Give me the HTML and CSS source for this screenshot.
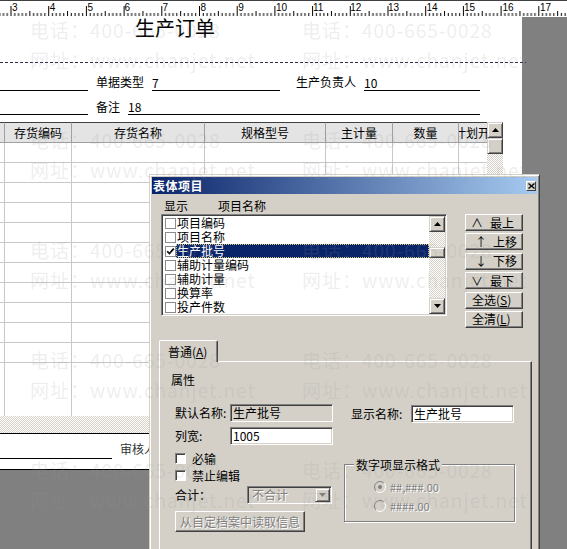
FILE: index.html
```html
<!DOCTYPE html>
<html lang="zh-CN">
<head>
<meta charset="utf-8">
<title>生产订单</title>
<link rel="stylesheet" href="styles.css">
</head>
<body>
<div class="screen">
  <svg class="ruler" width="567" height="17" viewBox="0 0 567 17">
    <defs>
      <pattern id="ticks" x="10.5" y="0" width="37.7" height="17" patternUnits="userSpaceOnUse">
        <path d="M0.5 6V16M4.27 13V16M8.04 13V16M11.81 13V16M15.58 13V16M19.35 11V16M23.12 13V16M26.89 13V16M30.66 13V16M34.43 13V16" stroke="#000" stroke-width="1"/>
      </pattern>
    </defs>
    <rect width="567" height="17" fill="#fff"/>
    <rect width="567" height="17" fill="url(#ticks)"/>
    <rect width="567" height="1" fill="#404040"/>
    <g class="ruler-nums">
      <text x="12" y="11">3</text>
      <text x="49.7" y="11">4</text>
      <text x="87.4" y="11">5</text>
      <text x="124.5" y="11">6</text>
      <text x="162.5" y="11">7</text>
      <text x="200.5" y="11">8</text>
      <text x="238.2" y="11">9</text>
      <text x="275.9" y="11">10</text>
      <text x="313" y="11">11</text>
      <text x="350.3" y="11">12</text>
      <text x="388" y="11">13</text>
      <text x="426.5" y="11">14</text>
      <text x="464" y="11">15</text>
      <text x="502.5" y="11">16</text>
      <text x="540" y="11">17</text>
    </g>
  </svg>

  <div class="page">
    <div class="title-band"><span class="doc-title">生产订单</span></div>
    <div class="dash"></div>
    <div class="frow frow-1">
      <span class="lline"></span>
      <span class="flbl">单据类型</span>
      <span class="fval val-type">7</span>
      <span class="flbl flbl-owner">生产负责人</span>
      <span class="fval val-owner">10</span>
    </div>
    <div class="frow frow-2">
      <span class="lline"></span>
      <span class="flbl">备注</span>
      <span class="fval val-note">18</span>
    </div>

    <div class="grid-wrap">
      <div class="grid">
        <div class="hd hd-first"></div>
        <div class="hd">存货编码</div>
        <div class="hd">存货名称</div>
        <div class="hd">规格型号</div>
        <div class="hd">主计量</div>
        <div class="hd">数量</div>
        <div class="hd hd-cut">计划开工日期</div>
        <div class="col col-first"></div>
        <div class="col"></div>
        <div class="col"></div>
        <div class="col"></div>
        <div class="col"></div>
        <div class="col"></div>
        <div class="col"></div>
      </div>
      <div class="vscroll">
        <div class="sbb"><svg width="7" height="4" viewBox="0 0 7 4"><polygon points="0,4 3.5,0 7,4" fill="#000"/></svg></div>
        <div class="sbb"></div>
        <div class="hatch sb-fill"></div>
      </div>
    </div>
    <div class="hatch hscroll"></div>
    <div class="footer">
      <span class="lline lline-foot"></span>
      <span class="ft-lbl">审核人</span>
    </div>
  </div>

  <div class="dialog">
    <div class="titlebar">
      <span class="ttl">表体项目</span>
      <span class="xbtn"><svg width="7" height="6" viewBox="0 0 7 6"><path d="M0.5 0.5L6.5 5.5M6.5 0.5L0.5 5.5" stroke="#000" stroke-width="1.3"/></svg></span>
    </div>
    <div class="colhdr"><span>显示</span><span class="colhdr-name">项目名称</span></div>
    <div class="listrow">
      <div class="listbox">
        <div class="items">
          <div class="item"><span class="lcb"></span><span class="itxt">项目编码</span></div>
          <div class="item"><span class="lcb"></span><span class="itxt">项目名称</span></div>
          <div class="item item-sel"><span class="lcb"><svg width="9" height="9" viewBox="0 0 9 9"><path d="M1.2 4.2L3.4 6.6L7.8 1.6" stroke="#000" stroke-width="1.7" fill="none"/></svg></span><span class="itxt">生产批号</span></div>
          <div class="item"><span class="lcb"></span><span class="itxt">辅助计量编码</span></div>
          <div class="item"><span class="lcb"></span><span class="itxt">辅助计量</span></div>
          <div class="item"><span class="lcb"></span><span class="itxt">换算率</span></div>
          <div class="item"><span class="lcb"></span><span class="itxt">投产件数</span></div>
        </div>
        <div class="lscroll">
          <div class="sbb"><svg width="7" height="4" viewBox="0 0 7 4"><polygon points="0,4 3.5,0 7,4" fill="#000"/></svg></div>
          <div class="hatch lsc-a"></div>
          <div class="sbb lsc-thumb"></div>
          <div class="hatch sb-fill"></div>
          <div class="sbb"><svg width="7" height="4" viewBox="0 0 7 4"><polygon points="0,0 7,0 3.5,4" fill="#000"/></svg></div>
        </div>
      </div>
      <div class="btncol">
        <div class="btn btn-a"><span class="ar">∧</span><span class="bt bt-a">最上</span></div>
        <div class="btn btn-b"><span class="ar">↑</span><span class="bt bt-b">上移</span></div>
        <div class="btn btn-b"><span class="ar">↓</span><span class="bt bt-b">下移</span></div>
        <div class="btn btn-a"><span class="ar">∨</span><span class="bt bt-a">最下</span></div>
        <div class="btn btn-c">全选(<u>S</u>)</div>
        <div class="btn btn-c">全清(<u>L</u>)</div>
      </div>
    </div>

    <div class="tabs">
      <div class="tabstrip"><div class="tab">普通(<u>A</u>)</div></div>
      <div class="tabpanel">
        <div class="ptitle">属性</div>
        <div class="pcols">
          <div class="pleft">
            <div class="prow">
              <span class="plbl">默认名称:</span>
              <span class="tbox tbox-ro">生产批号</span>
            </div>
            <div class="prow prow-gap">
              <span class="plbl">列宽:</span>
              <span class="tbox">1005</span>
            </div>
            <div class="pchk"><span class="cbx"></span><span class="pchk-lbl">必输</span></div>
            <div class="pchk"><span class="cbx"></span><span class="pchk-lbl">禁止编辑</span></div>
            <div class="psum">
              <span class="psum-lbl">合计：</span>
              <span class="combo">
                <span class="combo-txt">不合计</span>
                <span class="sbb combo-btn"><svg width="7" height="4" viewBox="0 0 7 4"><polygon points="0,0 7,0 3.5,4" fill="#808080"/></svg></span>
              </span>
            </div>
            <div class="rbtn">从自定档案中读取信息</div>
          </div>
          <div class="pright">
            <div class="prow prow-r">
              <span class="plbl plbl-wide">显示名称:</span>
              <span class="tbox">生产批号</span>
            </div>
            <div class="group">
              <div class="legend">数字项显示格式</div>
              <div class="ropt">
                <svg class="radio" width="12" height="12" viewBox="0 0 12 12"><circle cx="6" cy="6" r="5.5" fill="#d4d0c8"/><path d="M2.1 9.9A5.5 5.5 0 0 1 9.9 2.1" stroke="#808080" fill="none"/><path d="M9.9 2.1A5.5 5.5 0 0 1 2.1 9.9" stroke="#fff" fill="none"/><circle cx="6" cy="6" r="2" fill="#808080"/></svg>
                <span class="rlbl">##,###.00</span>
              </div>
              <div class="ropt">
                <svg class="radio" width="12" height="12" viewBox="0 0 12 12"><circle cx="6" cy="6" r="5.5" fill="#d4d0c8"/><path d="M2.1 9.9A5.5 5.5 0 0 1 9.9 2.1" stroke="#808080" fill="none"/><path d="M9.9 2.1A5.5 5.5 0 0 1 2.1 9.9" stroke="#fff" fill="none"/></svg>
                <span class="rlbl">####.00</span>
              </div>
            </div>
          </div>
        </div>
      </div>
    </div>
  </div>

  <div class="watermark">
    <div class="wm"><div>电话：400-665-0028</div><div>网址：www.chanjet.net</div></div>
    <div class="wm"><div>电话：400-665-0028</div><div>网址：www.chanjet.net</div></div>
    <div class="wm"><div>电话：400-665-0028</div><div>网址：www.chanjet.net</div></div>
    <div class="wm"><div>电话：400-665-0028</div><div>网址：www.chanjet.net</div></div>
    <div class="wm"><div>电话：400-665-0028</div><div>网址：www.chanjet.net</div></div>
    <div class="wm"><div>电话：400-665-0028</div><div>网址：www.chanjet.net</div></div>
    <div class="wm"><div>电话：400-665-0028</div><div>网址：www.chanjet.net</div></div>
    <div class="wm"><div>电话：400-665-0028</div><div>网址：www.chanjet.net</div></div>
    <div class="wm"><div>电话：400-665-0028</div><div>网址：www.chanjet.net</div></div>
    <div class="wm"><div>电话：400-665-0028</div><div>网址：www.chanjet.net</div></div>
  </div>
</div>
</body>
</html>
```

FILE: styles.css
```css
* { box-sizing: border-box; }
html, body { margin: 0; padding: 0; }
body { width: 567px; height: 549px; overflow: hidden; background: #808080; }

.screen {
  position: relative;
  width: 567px;
  height: 549px;
  overflow: hidden;
  background: #808080;
  font-family: "Noto Sans CJK SC", "Noto Sans", sans-serif;
  font-size: 12px;
  color: #000;
}

/* ruler */
.ruler { display: block; }
.ruler-nums { font-family: "Liberation Sans", Arial, sans-serif; font-size: 10px; fill: #000; }

/* report page */
.page { width: 522px; height: 453px; background: #fff; }
.title-band { height: 45px; padding-left: 135px; }
.doc-title { display: block; font-size: 20px; line-height: 21px; }
.dash {
  width: 526px;
  height: 1px;
  background: repeating-linear-gradient(to right, #2c2c4c 0 3px, transparent 3px 5px);
}
.frow { display: flex; align-items: flex-end; }
.frow-1 { height: 28px; }
.frow-2 { height: 24px; }
.lline { width: 88px; border-bottom: 1px solid #000; flex: none; }
.flbl { margin-left: 8px; line-height: 14px; margin-bottom: 2px; white-space: nowrap; }
.frow-2 .flbl { margin-bottom: 1px; }
.flbl-owner { margin-left: 16px; }
.fval { margin-left: 8px; line-height: 14px; border-bottom: 1px solid #000; }
.val-type { width: 128px; }
.val-owner { width: 116px; }
.val-note { width: 352px; }

/* table */
.grid-wrap { display: flex; height: 294px; margin-top: 7px; }
.grid {
  width: 487px;
  display: grid;
  grid-template-columns: 4px 67px 133px 121px 67px 66px 29px;
  grid-template-rows: 21px 1fr;
  background: repeating-linear-gradient(to bottom, transparent 0 19px, #c8c8c8 19px 20px) 0 21px / 100% 220px no-repeat;
}
.hd {
  background: #e4e4e4;
  border-top: 1px solid #404040;
  border-bottom: 1px solid #a0a0a0;
  border-left: 1px solid #a0a0a0;
  text-align: center;
  line-height: 19px;
  white-space: nowrap;
  overflow: hidden;
}
.hd-first { border-left: 0; }
.hd-cut { text-align: left; text-indent: -5px; }
.col { border-left: 1px solid #c8c8c8; }
.col-first { border-left: 0; }

.hatch {
  background-color: #fff;
  background-image: repeating-conic-gradient(#d4d0c8 0 25%, #fff 0 50%);
  background-size: 2px 2px;
}
.vscroll { width: 16px; display: flex; flex-direction: column; }
.sbb {
  flex: none;
  height: 16px;
  background: #d4d0c8;
  border: 1px solid;
  border-color: #d4d0c8 #404040 #404040 #d4d0c8;
  box-shadow: inset 1px 1px #fff, inset -1px -1px #808080;
  display: flex;
  align-items: center;
  justify-content: center;
}
.sb-fill { flex: 1; }
.hscroll { width: 503px; height: 17px; }
.footer {
  height: 37px;
  border-top: 1px solid #000;
  border-bottom: 1px solid #000;
  display: flex;
  align-items: flex-start;
}
.lline-foot { width: 112px; height: 25px; }
.ft-lbl { margin: 8px 0 0 8px; line-height: 14px; color: #333; }

/* dialog */
.dialog {
  position: absolute;
  left: 149px;
  top: 174px;
  width: 391px;
  height: 390px;
  background: #d4d0c8;
  border: 1px solid;
  border-color: #d4d0c8 #404040 #404040 #d4d0c8;
  box-shadow: inset 1px 1px #fff, inset -1px -1px #808080;
  padding: 2px;
}
.titlebar {
  height: 17px;
  background: linear-gradient(to right, #0a246a, #a6caf0);
  display: flex;
  align-items: center;
  justify-content: space-between;
  padding: 0 1px;
}
.ttl { color: #fff; font-weight: 700; line-height: 17px; letter-spacing: 0.5px; }
.xbtn {
  width: 10px;
  height: 10px;
  background: #d4d0c8;
  border: 1px solid;
  border-color: #fff #404040 #404040 #fff;
  display: flex;
  align-items: center;
  justify-content: center;
}
.colhdr { height: 20px; padding: 5px 0 0 12px; line-height: 14px; display: flex; }
.colhdr-name { margin-left: 30px; }
.listrow { display: flex; align-items: flex-start; padding-left: 9px; }
.listbox {
  width: 286px;
  height: 102px;
  display: flex;
  background: #fff;
  border: 1px solid;
  border-color: #808080 #fff #fff #808080;
  box-shadow: inset 1px 1px #404040, inset -1px -1px #d4d0c8;
  padding: 1px;
}
.items { flex: 1; }
.item { height: 14px; display: flex; align-items: center; }
.lcb {
  flex: none;
  width: 11px;
  height: 11px;
  margin-left: 2px;
  border: 1px solid #8c8c8c;
  background: #fff;
  display: flex;
  align-items: center;
  justify-content: center;
}
.itxt { padding-left: 1px; line-height: 14px; white-space: nowrap; }
.item-sel .itxt {
  flex: 1;
  align-self: stretch;
  background: #0a246a;
  color: #fff;
  outline: 1px dotted #d8c87a;
  outline-offset: -1px;
}
.lscroll { width: 16px; display: flex; flex-direction: column; }
.lsc-a { height: 15px; flex: none; }
.lsc-thumb { height: 11px; }

.btncol { margin-left: 18px; width: 58px; display: flex; flex-direction: column; gap: 2.4px; }
.btn {
  height: 17px;
  background: #d4d0c8;
  border: 1px solid;
  border-color: #fff #404040 #404040 #fff;
  box-shadow: inset -1px -1px #808080;
  display: flex;
  align-items: center;
  line-height: 14px;
  white-space: nowrap;
}
.btn-a { padding-left: 5px; }
.btn-b { padding-left: 9px; }
.btn-c { padding-left: 6px; }
.ar { display: inline-block; width: 12px; text-align: center; }
.bt-a { margin-left: 7px; }
.bt-b { margin-left: 6px; }

.tabs { margin: 12px 0 0 7px; width: 373px; }
.tabstrip { display: flex; }
.tab {
  position: relative;
  z-index: 1;
  width: 59px;
  height: 22px;
  margin-bottom: -1px;
  background: #d4d0c8;
  border-top: 1px solid #fff;
  border-left: 1px solid #fff;
  border-right: 1px solid #404040;
  box-shadow: inset -1px 0 #808080;
  border-radius: 2px 2px 0 0;
  padding: 4px 0 0 8px;
  line-height: 14px;
}
.tabpanel {
  height: 200px;
  border-top: 1px solid #fff;
  border-left: 1px solid #fff;
  border-right: 1px solid #404040;
  box-shadow: inset -1px 0 #808080;
}
.ptitle { margin-top: 11px; padding-left: 11px; line-height: 14px; }
.pcols { display: flex; align-items: flex-start; margin-top: 17px; }
.pleft { width: 173px; padding-left: 15px; }
.pright { width: 171px; margin-left: 11px; padding-top: 1px; }
.prow { display: flex; align-items: center; height: 18px; }
.prow-gap { margin-top: 5px; }
.prow-r { padding-left: 7px; }
.plbl { width: 55px; flex: none; white-space: nowrap; line-height: 18px; }
.plbl-wide { width: 60px; }
.tbox {
  width: 103px;
  height: 18px;
  flex: none;
  background: #fff;
  border: 1px solid;
  border-color: #808080 #fff #fff #808080;
  box-shadow: inset 1px 1px #404040, inset -1px -1px #d4d0c8;
  padding-left: 2px;
  line-height: 16px;
  white-space: nowrap;
}
.tbox-ro { background: #d4d0c8; }
.pchk { display: flex; align-items: center; height: 14px; margin-top: 7px; }
.pchk + .pchk { margin-top: 3px; }
.cbx {
  flex: none;
  width: 11px;
  height: 11px;
  background: #fff;
  border: 1px solid;
  border-color: #808080 #fff #fff #808080;
  box-shadow: inset 1px 1px #404040;
}
.pchk-lbl { margin-left: 6px; line-height: 14px; }
.psum { display: flex; align-items: center; height: 18px; margin-top: 3px; }
.psum-lbl { width: 72px; flex: none; }
.combo {
  width: 85px;
  height: 18px;
  background: #d4d0c8;
  border: 1px solid;
  border-color: #808080 #fff #fff #808080;
  box-shadow: inset 1px 1px #404040, inset -1px -1px #d4d0c8;
  padding: 1px;
  display: flex;
}
.combo-txt { flex: 1; padding-left: 3px; line-height: 14px; color: #808080; text-shadow: 1px 1px #fff; }
.combo-btn { width: 15px; height: 14px; }
.rbtn {
  margin-top: 7px;
  width: 130px;
  height: 21px;
  background: #d4d0c8;
  border: 1px solid;
  border-color: #fff #404040 #404040 #fff;
  box-shadow: inset -1px -1px #808080;
  display: flex;
  align-items: center;
  justify-content: center;
  color: #808080;
  text-shadow: 1px 1px #fff;
  white-space: nowrap;
}
.group {
  margin-top: 41px;
  width: 171px;
  height: 58px;
  border: 1px solid #808080;
  box-shadow: inset 1px 1px #fff, 1px 1px #fff;
}
.legend {
  width: fit-content;
  margin: -7px 0 0 9px;
  padding: 0 2px;
  background: #d4d0c8;
  line-height: 14px;
}
.ropt {
  display: flex;
  align-items: center;
  height: 14px;
  padding-left: 29px;
  margin-top: 8px;
}
.ropt + .ropt { margin-top: 5px; }
.radio { flex: none; display: block; }
.rlbl { margin-left: 4px; font-size: 11px; line-height: 14px; color: #808080; text-shadow: 1px 1px #fff; }

/* watermark overlay */
.watermark {
  position: absolute;
  left: 30px;
  top: 15px;
  display: grid;
  grid-template-columns: 272px 272px;
  grid-auto-rows: 110px;
  pointer-events: none;
  z-index: 10;
  font-size: 19px;
  line-height: 30px;
  letter-spacing: 1px;
  white-space: nowrap;
  color: rgba(150, 150, 150, 0.17);
}
```
